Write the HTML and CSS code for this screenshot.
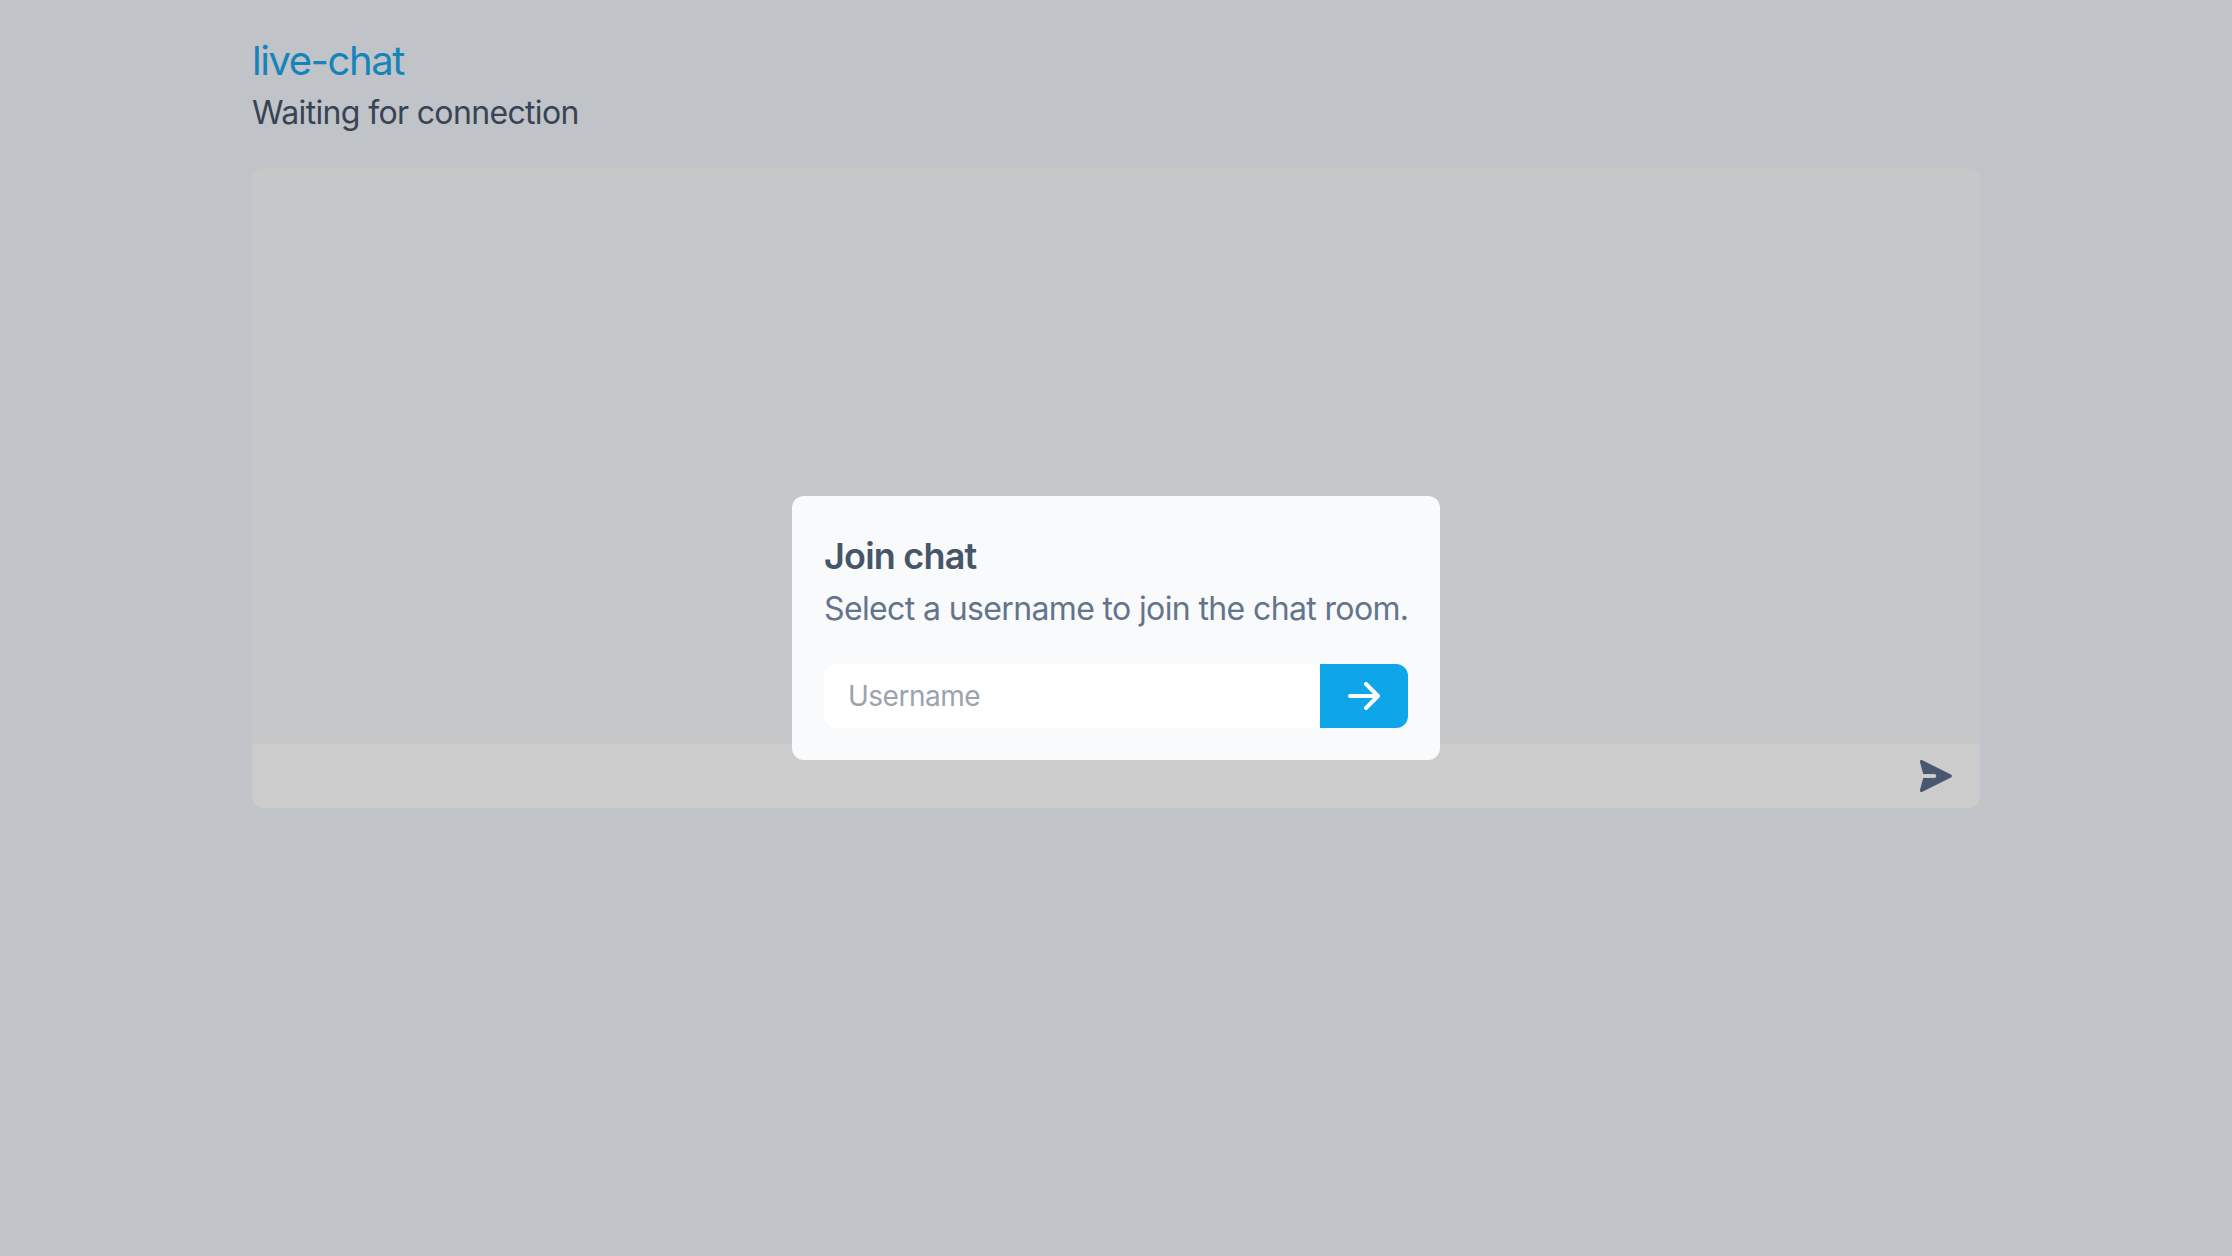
FILE: index.html
```html
<!DOCTYPE html>
<html lang="en">
<head>
<meta charset="utf-8">
<title>live-chat</title>
<link rel="stylesheet" href="styles.css">
</head>
<body>
<main class="page">
  <header class="header">
    <h1 class="title"><span>live-chat</span></h1>
    <p class="status"><span>Waiting for connection</span></p>
  </header>
  <section class="chat">
    <div class="messages"></div>
    <div class="composer">
      <button class="send" aria-label="Send">
        <svg viewBox="0 0 32 32" width="32" height="32"><path d="M0 2.2C-.3.7 1-.3 2.400 .300L31 14.500C32.300 15.200 32.300 16.800 31 17.500L2.400 31.700C1 32.300-.3 31.300 0 29.800L3.200 18H14.300C15.500 18 16.200 17.100 16.200 16S15.500 14 14.300 14H3.200Z" fill="currentColor"/></svg>
      </button>
    </div>
  </section>
</main>
<div class="overlay">
  <form class="modal">
    <h2 class="modal-title"><span>Join chat</span></h2>
    <p class="modal-text"><span>Select a username to join the chat room.</span></p>
    <div class="field">
      <div class="input"><span>Username</span></div>
      <button class="join" type="button" aria-label="Join">
        <svg viewBox="0 0 32 28" width="32" height="28" fill="none" stroke="currentColor" stroke-width="4" stroke-linecap="round" stroke-linejoin="round"><path d="M2 14H30M18 2L30 14L18 26"/></svg>
      </button>
    </div>
  </form>
</div>
</body>
</html>
```
FILE: styles.css
```css
* { box-sizing: border-box; }
body {
  margin: 0;
  height: 1256px;
  overflow: hidden;
  background: #f0f4fa;
  font-family: Inter, "Liberation Sans", sans-serif;
}
h1, h2, p { margin: 0; font-weight: 400; }
button { border: 0; padding: 0; background: none; display: flex; align-items: center; justify-content: center; }
.page { width: 1728px; margin: 0 auto; padding-top: 33px; }
.header { height: 135px; }
.title { font-size: 40px; line-height: 56px; letter-spacing: -1.45px; color: #1aa6ea; }
.status { font-size: 32px; line-height: 48px; letter-spacing: -.65px; color: #475569; }
.chat { height: 640px; border-radius: 12px; overflow: hidden; display: flex; flex-direction: column; background: #f8f9fb; }
.messages { flex: 1; }
.composer { height: 64px; background: #fff; display: flex; justify-content: flex-end; }
.send { width: 88px; color: #5a6e8c; }
.overlay { position: fixed; inset: 0; background: rgba(0, 0, 0, .2); display: flex; align-items: center; justify-content: center; }
.modal { width: 648px; height: 264px; padding: 32px; border-radius: 12px; background: #f8fafc; }
.modal-title { font-size: 36px; line-height: 56px; font-weight: 600; letter-spacing: -.8px; color: #475569; }
.modal-text { font-size: 32px; line-height: 50px; letter-spacing: -.63px; color: #64748b; white-space: nowrap; }
.field { height: 64px; margin-top: 30px; border-radius: 12px; overflow: hidden; display: flex; }
.input { flex: 1; padding: 0 24px; background: #fff; font-size: 28px; line-height: 64px; letter-spacing: -.5px; color: #9ca3af; }
.join { width: 88px; background: #0ea5e9; color: #fff; }
```
